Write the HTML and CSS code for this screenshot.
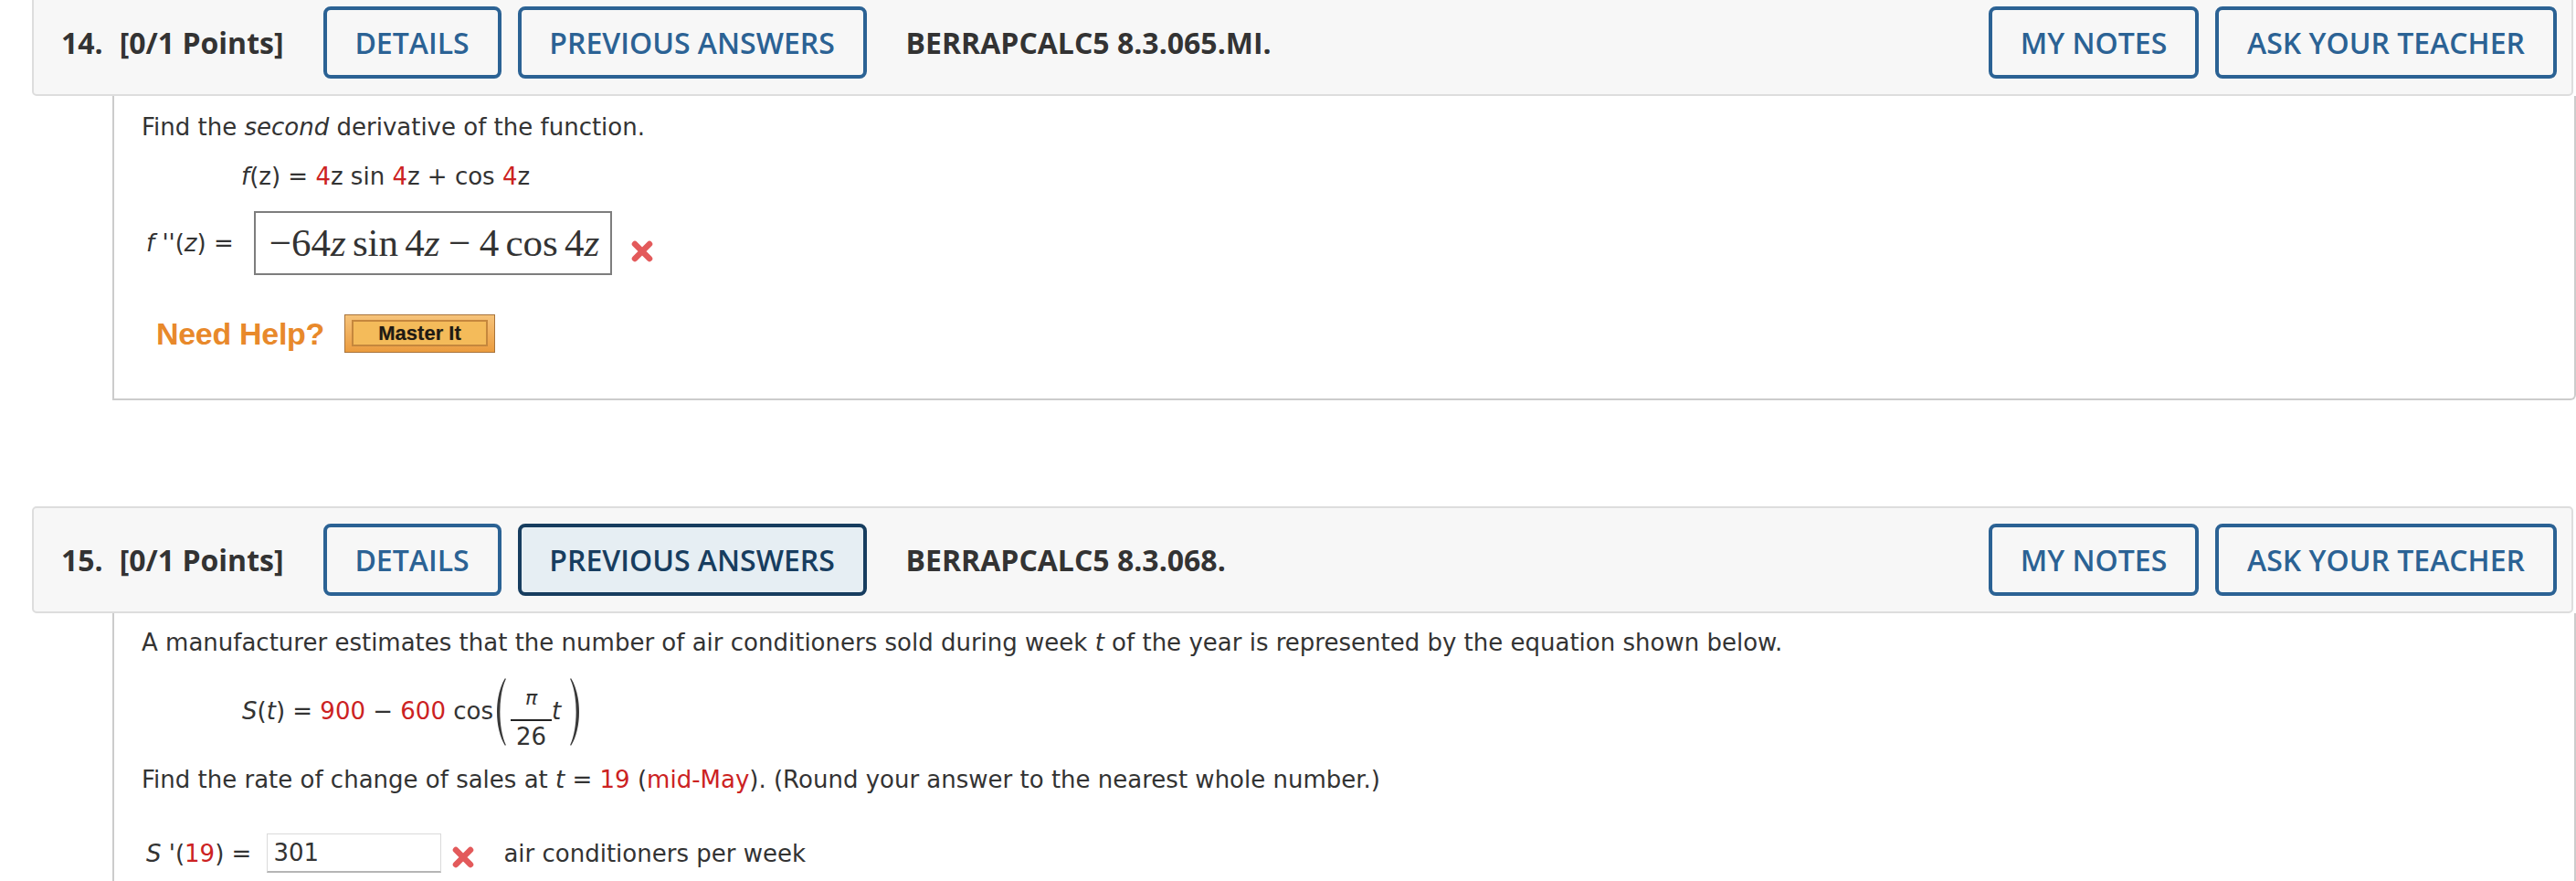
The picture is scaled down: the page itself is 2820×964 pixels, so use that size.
FILE: index.html
```html
<!DOCTYPE html>
<html lang="en">
<head>
<meta charset="utf-8">
<title>WebAssign questions</title>
<link rel="stylesheet" href="styles.css">
</head>
<body>
<div class="page">

  <section class="question">
    <header class="qhead">
      <span class="qnum">14.</span>
      <span class="qpts">[0/1 Points]</span>
      <button class="btn btn-details">DETAILS</button>
      <button class="btn btn-prev">PREVIOUS ANSWERS</button>
      <span class="qid">BERRAPCALC5 8.3.065.MI.</span>
      <button class="btn btn-notes">MY NOTES</button>
      <button class="btn btn-ask">ASK YOUR TEACHER</button>
    </header>
    <div class="qbody qbody-14">
      <p class="line">Find the <i>second</i> derivative of the function.</p>
      <p class="line eq-fz"><i>f</i>(z) = <span class="red">4</span>z sin <span class="red">4</span>z + cos <span class="red">4</span>z</p>
      <div class="answer-row ans-14">
        <span class="ans-label"><i>f</i> ''(<i>z</i>) =</span>
        <span class="math-box"><span class="mj"><span class="mo">−</span>64<i>z</i><span class="fn">sin</span>4<i>z</i><span class="bin">−</span>4<span class="fn">cos</span>4<i>z</i></span></span>
        <svg class="xmark xmark-14" viewBox="0 0 28 26" width="28" height="26"><path d="M6 5 L22 21 M22 5 L6 21" stroke="#e35a5b" stroke-width="6.5" stroke-linecap="round" fill="none"/></svg>
      </div>
      <div class="help-row">
        <span class="need-help">Need Help?</span>
        <span class="master-btn"><span class="master-inner">Master It</span></span>
      </div>
    </div>
  </section>

  <section class="question q15">
    <header class="qhead">
      <span class="qnum">15.</span>
      <span class="qpts">[0/1 Points]</span>
      <button class="btn btn-details">DETAILS</button>
      <button class="btn btn-prev active">PREVIOUS ANSWERS</button>
      <span class="qid">BERRAPCALC5 8.3.068.</span>
      <button class="btn btn-notes">MY NOTES</button>
      <button class="btn btn-ask">ASK YOUR TEACHER</button>
    </header>
    <div class="qbody qbody-15">
      <p class="line">A manufacturer estimates that the number of air conditioners sold during week <i>t</i> of the year is represented by the equation shown below.</p>
      <div class="eq-st">
        <span class="st-text"><i>S</i>(<i>t</i>) = <span class="red">900</span> − <span class="red">600</span> cos</span>
        <svg class="paren" viewBox="0 0 12 76" width="12" height="76"><path d="M11 1 C-1 20 -1 56 11 75 L11.8 74 C3.2 56 3.2 20 11.8 2 Z" fill="#3a3a3a"/></svg>
        <span class="frac"><span class="num"><i>π</i></span><span class="den">26</span></span>
        <span class="st-text"><i>t</i></span>
        <svg class="paren paren-r" viewBox="0 0 12 76" width="12" height="76"><path d="M1 1 C13 20 13 56 1 75 L0.2 74 C8.8 56 8.8 20 0.2 2 Z" fill="#3a3a3a"/></svg>
      </div>
      <p class="line rate">Find the rate of change of sales at <i>t</i> = <span class="red">19</span> (<span class="red">mid-May</span>). (Round your answer to the nearest whole number.)</p>
      <div class="answer-row ans-15">
        <span class="ans-label"><i>S</i> '(<span class="red">19</span>) =</span>
        <span class="text-input">301</span>
        <svg class="xmark xmark-15" viewBox="0 0 28 26" width="28" height="26"><path d="M6 5 L22 21 M22 5 L6 21" stroke="#e35a5b" stroke-width="6.5" stroke-linecap="round" fill="none"/></svg>
        <span class="unit">air conditioners per week</span>
      </div>
    </div>
  </section>

</div>
</body>
</html>
```
FILE: styles.css
```css
html, body {
  margin: 0;
  padding: 0;
  background: #ffffff;
}
body {
  width: 2820px;
  height: 964px;
  overflow: hidden;
  font-family: "DejaVu Sans", Verdana, sans-serif;
  font-size: 26px;
  color: #333333;
}
p { margin: 0; }

.page {
  padding-left: 35px;
  margin-top: -12px;
}

.q15 { margin-top: 116px; }

/* ---------- header bar ---------- */
.qhead {
  display: flex;
  align-items: center;
  height: 79px;
  padding: 17px 16px 17px 30px;
  margin-right: 3px;
  border: 2px solid #dddddd;
  border-radius: 5px;
  background: #f7f7f7;
  font-family: "Open Sans", "Liberation Sans", sans-serif;
  font-size: 32px;
  color: #333333;
}
.qnum { font-weight: 700; }
.qpts { font-weight: 700; margin-left: 18px; }
.qid { font-weight: 700; margin-left: 43px; margin-right: auto; }

.btn {
  box-sizing: border-box;
  height: 79px;
  padding: 0;
  border: 4px solid #2b6294;
  border-radius: 8px;
  background: transparent;
  color: #2b6294;
  font-family: "Open Sans", "Liberation Sans", sans-serif;
  font-size: 32px;
  font-weight: 600;
  text-align: center;
  white-space: nowrap;
}
.btn.active {
  background: #e6eef3;
  border-color: #173d5f;
  color: #173d5f;
}
.btn-details { width: 195px; margin-left: 43px; }
.btn-prev { width: 382px; margin-left: 18px; }
.btn-notes { width: 230px; }
.btn-ask { width: 374px; margin-left: 18px; }

/* ---------- question body ---------- */
.qbody {
  margin-left: 88px;
  border-left: 2px solid #cccccc;
  border-right: 2px solid #cccccc;
  border-bottom: 2px solid #cccccc;
  border-bottom-right-radius: 6px;
  padding: 19px 30px 50px 30px;
}
.qbody-15 { padding-top: 17px; padding-bottom: 60px; }

.line { line-height: 30px; white-space: nowrap; }
.red { color: #cc2222; }

.eq-fz { margin-top: 24px; padding-left: 109px; }

.answer-row {
  display: flex;
  align-items: center;
  line-height: 30px;
}
.ans-14 { margin-top: 23px; height: 70px; }
.ans-label { padding-left: 5px; white-space: nowrap; }
.ans-14 .ans-label { margin-right: 22px; }

.math-box {
  box-sizing: border-box;
  width: 392px;
  height: 70px;
  display: flex;
  align-items: center;
  padding-left: 15px;
  border: 2px solid #7d7d7d;
  background: #ffffff;
  font-family: "Liberation Serif", "DejaVu Serif", serif;
  font-size: 43px;
  color: #333333;
  white-space: nowrap;
}
.mj i { font-style: italic; }
.fn { margin: 0 0.167em; }
.bin { margin: 0 0.222em; }

.xmark { display: block; flex: none; }
.xmark-14 { margin-left: 19px; margin-top: 18px; }

.help-row {
  display: flex;
  align-items: center;
  margin-top: 43px;
  padding-left: 16px;
  height: 42px;
}
.need-help {
  font-family: "Liberation Sans", Arial, sans-serif;
  font-weight: 700;
  font-size: 34px;
  color: #e8892b;
  letter-spacing: -0.3px;
}
.master-btn {
  box-sizing: border-box;
  display: flex;
  width: 165px;
  height: 42px;
  margin-left: 22px;
  padding: 5px 7px 6px 7px;
  border: 1px solid #a8733a;
  background: linear-gradient(#f6c37a, #eb9c3f);
}
.master-inner {
  flex: 1;
  display: flex;
  align-items: center;
  justify-content: center;
  border: 2px solid #c5873d;
  background: #f4bb5a;
  font-family: "Liberation Sans", Arial, sans-serif;
  font-weight: 700;
  font-size: 22px;
  color: #1e1a14;
  text-shadow: 0 0 1px rgba(0, 0, 0, 0.35);
}

/* ---------- S(t) equation ---------- */
.eq-st {
  display: flex;
  align-items: flex-start;
  margin-top: 23px;
  padding-left: 110px;
}
.st-text {
  margin-top: 22px;
  line-height: 30px;
  white-space: nowrap;
}
.paren { display: block; flex: none; margin-left: 2px; }
.paren-r { margin-left: 10px; }
.frac {
  display: flex;
  flex-direction: column;
  align-items: stretch;
  margin-top: 11px;
  margin-left: 5px;
  text-align: center;
}
.num {
  font-size: 22px;
  line-height: 24px;
  padding-bottom: 11px;
  border-bottom: 2px solid #222222;
}
.den {
  margin-top: 2px;
  line-height: 30px;
  padding: 0 6px;
}

.rate { margin-top: 17px; }

.ans-15 { margin-top: 44px; height: 43px; }
.ans-15 .ans-label { margin-right: 17px; }
.text-input {
  box-sizing: border-box;
  width: 191px;
  height: 43px;
  padding-left: 6px;
  border: 1px solid #dadada;
  border-bottom: 2px solid #b5b5b5;
  line-height: 40px;
  background: #ffffff;
}
.xmark-15 { margin-left: 10px; margin-top: 9px; }
.unit { margin-left: 30px; white-space: nowrap; }
```
